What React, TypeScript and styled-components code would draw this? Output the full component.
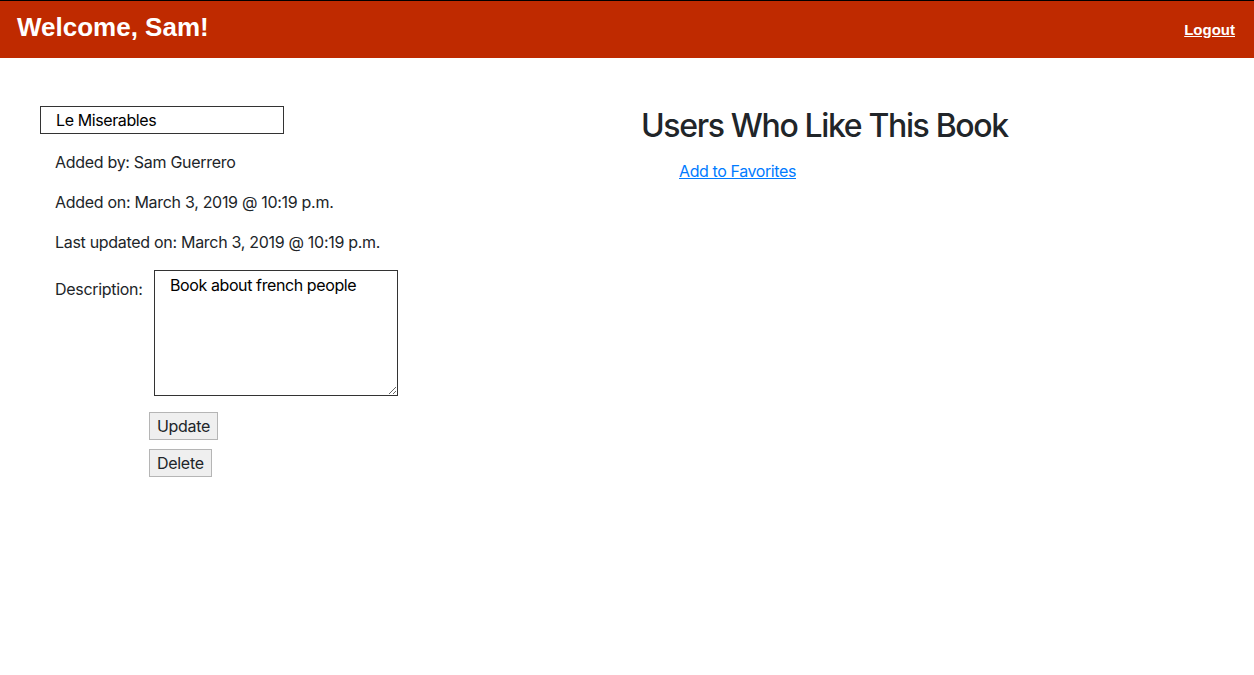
import React from "react";
import styled, { createGlobalStyle } from "styled-components";

const Global = createGlobalStyle`
  html, body { margin: 0; padding: 0; background: #fff; }
  body {
    font-family: Inter, "Liberation Sans", Arial, sans-serif;
    font-size: 16px;
    line-height: 1.5;
    letter-spacing: -0.3px;
    color: #212529;
  }
  * { box-sizing: border-box; }
`;

const Header = styled.header`
  display: flex;
  align-items: center;
  justify-content: space-between;
  height: 58px;
  border-top: 1px solid #000;
  background: #bf2a00;
  padding: 0 19px 0 17px;
`;

const Title = styled.h1`
  margin: 0 0 4px;
  font-family: "Liberation Sans", Arial, sans-serif;
  font-weight: 700;
  font-size: 26px;
  line-height: 1.2;
  letter-spacing: 0;
  color: #fff;
`;

const LogoutLink = styled.a`
  font-family: "Liberation Sans", Arial, sans-serif;
  font-weight: 700;
  font-size: 15px;
  letter-spacing: 0;
  color: #fff;
  text-decoration: underline;
  margin-top: 2px;
`;

const Main = styled.main`
  display: flex;
`;

const Column = styled.section<{ $left?: boolean }>`
  flex: 0 0 50%;
  padding: ${(p) => (p.$left ? "48px 0 0 40px" : "49px 0 0 14px")};
`;

const TitleInput = styled.input`
  display: block;
  width: 244px;
  height: 28px;
  border: 1px solid #333;
  padding: 0 0 0 15px;
  font: inherit;
  letter-spacing: -0.4px;
  color: #000;
  outline: none;
`;

const Details = styled.div`
  padding: 16px 0 0 15px;
`;

const Info = styled.p`
  margin: 0 0 16px;
`;

const DescRow = styled.div`
  display: flex;
  align-items: flex-start;
`;

const DescLabel = styled.label`
  width: 99px;
  padding-top: 7px;
`;

const DescArea = styled.textarea`
  width: 244px;
  height: 126px;
  border: 1px solid #333;
  padding: 4px 15px 3px;
  font: inherit;
  letter-spacing: -0.4px;
  line-height: 1.25;
  color: #000;
  resize: both;
  outline: none;
`;

const Actions = styled.div`
  display: flex;
  flex-direction: column;
  align-items: flex-start;
  gap: 9px;
  padding: 16px 0 0 94px;
`;

const Button = styled.button`
  font-family: inherit;
  font-size: 16px;
  letter-spacing: -0.3px;
  line-height: 1.5;
  height: 28px;
  padding: 0 7px;
  background: #efefef;
  border: 1px solid #b5b5b5;
  color: #212529;
  border-radius: 0;
`;

const Heading = styled.h2`
  margin: 0 0 14px;
  font-size: 32px;
  font-weight: 500;
  line-height: 1.2;
  letter-spacing: -1.35px;
`;

const FavLink = styled.a`
  display: inline-block;
  margin-left: 38px;
  color: #007bff;
  letter-spacing: -0.4px;
  text-decoration: underline;
`;

export default function App() {
  return (
    <>
      <Global />
      <Header>
        <Title>Welcome, Sam!</Title>
        <LogoutLink href="#">Logout</LogoutLink>
      </Header>
      <Main>
        <Column $left>
          <TitleInput defaultValue="Le Miserables" />
          <Details>
            <Info>Added by: Sam Guerrero</Info>
            <Info>Added on: March 3, 2019 @ 10:19 p.m.</Info>
            <Info>Last updated on: March 3, 2019 @ 10:19 p.m.</Info>
            <DescRow>
              <DescLabel>Description:</DescLabel>
              <DescArea defaultValue="Book about french people" />
            </DescRow>
            <Actions>
              <Button>Update</Button>
              <Button>Delete</Button>
            </Actions>
          </Details>
        </Column>
        <Column>
          <Heading>Users Who Like This Book</Heading>
          <FavLink href="#">Add to Favorites</FavLink>
        </Column>
      </Main>
    </>
  );
}
